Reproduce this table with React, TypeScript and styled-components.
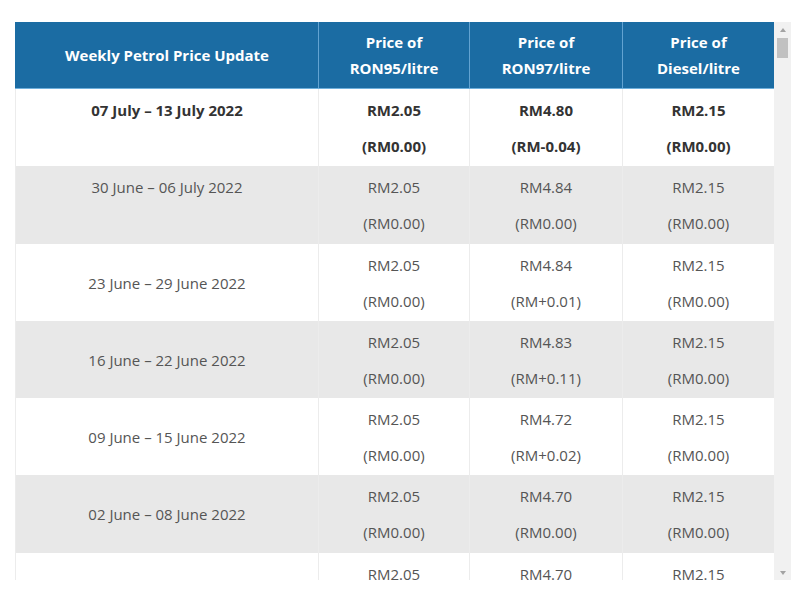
import React, { FC } from "react";
import styled, { createGlobalStyle } from "styled-components";

const GlobalStyle = createGlobalStyle`
  html, body {
    margin: 0;
    padding: 0;
    background: #fff;
    font-family: "Open Sans", "Liberation Sans", sans-serif;
  }
`;

const Frame = styled.div`
  display: flex;
  width: 776px;
  height: 558px;
  margin: 22px 0 0 15px;
`;

const Viewport = styled.div`
  flex: 1;
  overflow: hidden;
`;

const PriceTable = styled.table`
  width: 759px;
  border-collapse: collapse;
  table-layout: fixed;
  font-size: 15px;
`;

const HeadCell = styled.th`
  height: 66px;
  padding: 0 8px;
  background: #1b6ca3;
  color: #fff;
  font-weight: 700;
  line-height: 26px;
  text-align: center;
  vertical-align: middle;
  border-left: 1px solid #63a3d1;
  border-right: 1px solid #63a3d1;
  border-bottom: 1px solid #6fb0dc;
  &:first-child {
    border-left-color: #1b6ca3;
  }
`;

const Row = styled.tr<{ $shaded: boolean }>`
  background: ${(p) => (p.$shaded ? "#e8e8e8" : "#fff")};
`;

const Cell = styled.td<{ $bold?: boolean; $middle?: boolean }>`
  padding: 9px 8px 8.3px;
  text-align: center;
  vertical-align: ${(p) => (p.$middle ? "middle" : "top")};
  color: ${(p) => (p.$bold ? "#333" : "#555")};
  font-weight: ${(p) => (p.$bold ? 700 : 400)};
  line-height: 24px;
  border-left: 1px solid #ececec;
  border-right: 1px solid #ececec;
`;

const Lines = styled.div`
  display: flex;
  flex-direction: column;
  gap: 12px;
`;

const Scrollbar = styled.div`
  width: 17px;
  background: #f1f1f1;
  display: flex;
  flex-direction: column;
  align-items: center;
`;

const ArrowBox = styled.div`
  height: 15px;
  width: 17px;
  display: flex;
  align-items: center;
  justify-content: center;
`;

const Arrow = styled.span<{ $down?: boolean }>`
  width: 0;
  height: 0;
  border-left: 3.5px solid transparent;
  border-right: 3.5px solid transparent;
  ${(p) =>
    p.$down
      ? "border-top: 4px solid #a3a3a3;"
      : "border-bottom: 4px solid #a3a3a3;"}
`;

const Track = styled.div`
  flex: 1;
  width: 100%;
  display: flex;
  justify-content: center;
`;

const Thumb = styled.div`
  width: 11px;
  height: 20px;
  margin-top: 1px;
  background: #c1c1c1;
`;

type Week = {
  week: string;
  prices: [string, string][];
};

const weeks: Week[] = [
  {
    week: "07 July – 13 July 2022",
    prices: [
      ["RM2.05", "(RM0.00)"],
      ["RM4.80", "(RM-0.04)"],
      ["RM2.15", "(RM0.00)"],
    ],
  },
  {
    week: "30 June – 06 July 2022",
    prices: [
      ["RM2.05", "(RM0.00)"],
      ["RM4.84", "(RM0.00)"],
      ["RM2.15", "(RM0.00)"],
    ],
  },
  {
    week: "23 June – 29 June 2022",
    prices: [
      ["RM2.05", "(RM0.00)"],
      ["RM4.84", "(RM+0.01)"],
      ["RM2.15", "(RM0.00)"],
    ],
  },
  {
    week: "16 June – 22 June 2022",
    prices: [
      ["RM2.05", "(RM0.00)"],
      ["RM4.83", "(RM+0.11)"],
      ["RM2.15", "(RM0.00)"],
    ],
  },
  {
    week: "09 June – 15 June 2022",
    prices: [
      ["RM2.05", "(RM0.00)"],
      ["RM4.72", "(RM+0.02)"],
      ["RM2.15", "(RM0.00)"],
    ],
  },
  {
    week: "02 June – 08 June 2022",
    prices: [
      ["RM2.05", "(RM0.00)"],
      ["RM4.70", "(RM0.00)"],
      ["RM2.15", "(RM0.00)"],
    ],
  },
  {
    week: "26 May – 01 June 2022",
    prices: [
      ["RM2.05", "(RM0.00)"],
      ["RM4.70", "(RM0.00)"],
      ["RM2.15", "(RM0.00)"],
    ],
  },
];

const App: FC = () => {
  return (
    <>
      <GlobalStyle />
      <Frame>
        <Viewport>
          <PriceTable>
            <colgroup>
              <col style={{ width: 303 }} />
              <col style={{ width: 151 }} />
              <col style={{ width: 153 }} />
              <col style={{ width: 152 }} />
            </colgroup>
            <thead>
              <tr>
                <HeadCell>Weekly Petrol Price Update</HeadCell>
                <HeadCell>
                  Price of
                  <br />
                  RON95/litre
                </HeadCell>
                <HeadCell>
                  Price of
                  <br />
                  RON97/litre
                </HeadCell>
                <HeadCell>
                  Price of
                  <br />
                  Diesel/litre
                </HeadCell>
              </tr>
            </thead>
            <tbody>
              {weeks.map((w, i) => (
                <Row key={w.week} $shaded={i % 2 === 1}>
                  <Cell $bold={i === 0} $middle={i > 1}>
                    {w.week}
                  </Cell>
                  {w.prices.map(([price, change]) => (
                    <Cell key={price + change} $bold={i === 0}>
                      <Lines>
                        <span>{price}</span>
                        <span>{change}</span>
                      </Lines>
                    </Cell>
                  ))}
                </Row>
              ))}
            </tbody>
          </PriceTable>
        </Viewport>
        <Scrollbar>
          <ArrowBox>
            <Arrow />
          </ArrowBox>
          <Track>
            <Thumb />
          </Track>
          <ArrowBox>
            <Arrow $down />
          </ArrowBox>
        </Scrollbar>
      </Frame>
    </>
  );
};

export default App;
